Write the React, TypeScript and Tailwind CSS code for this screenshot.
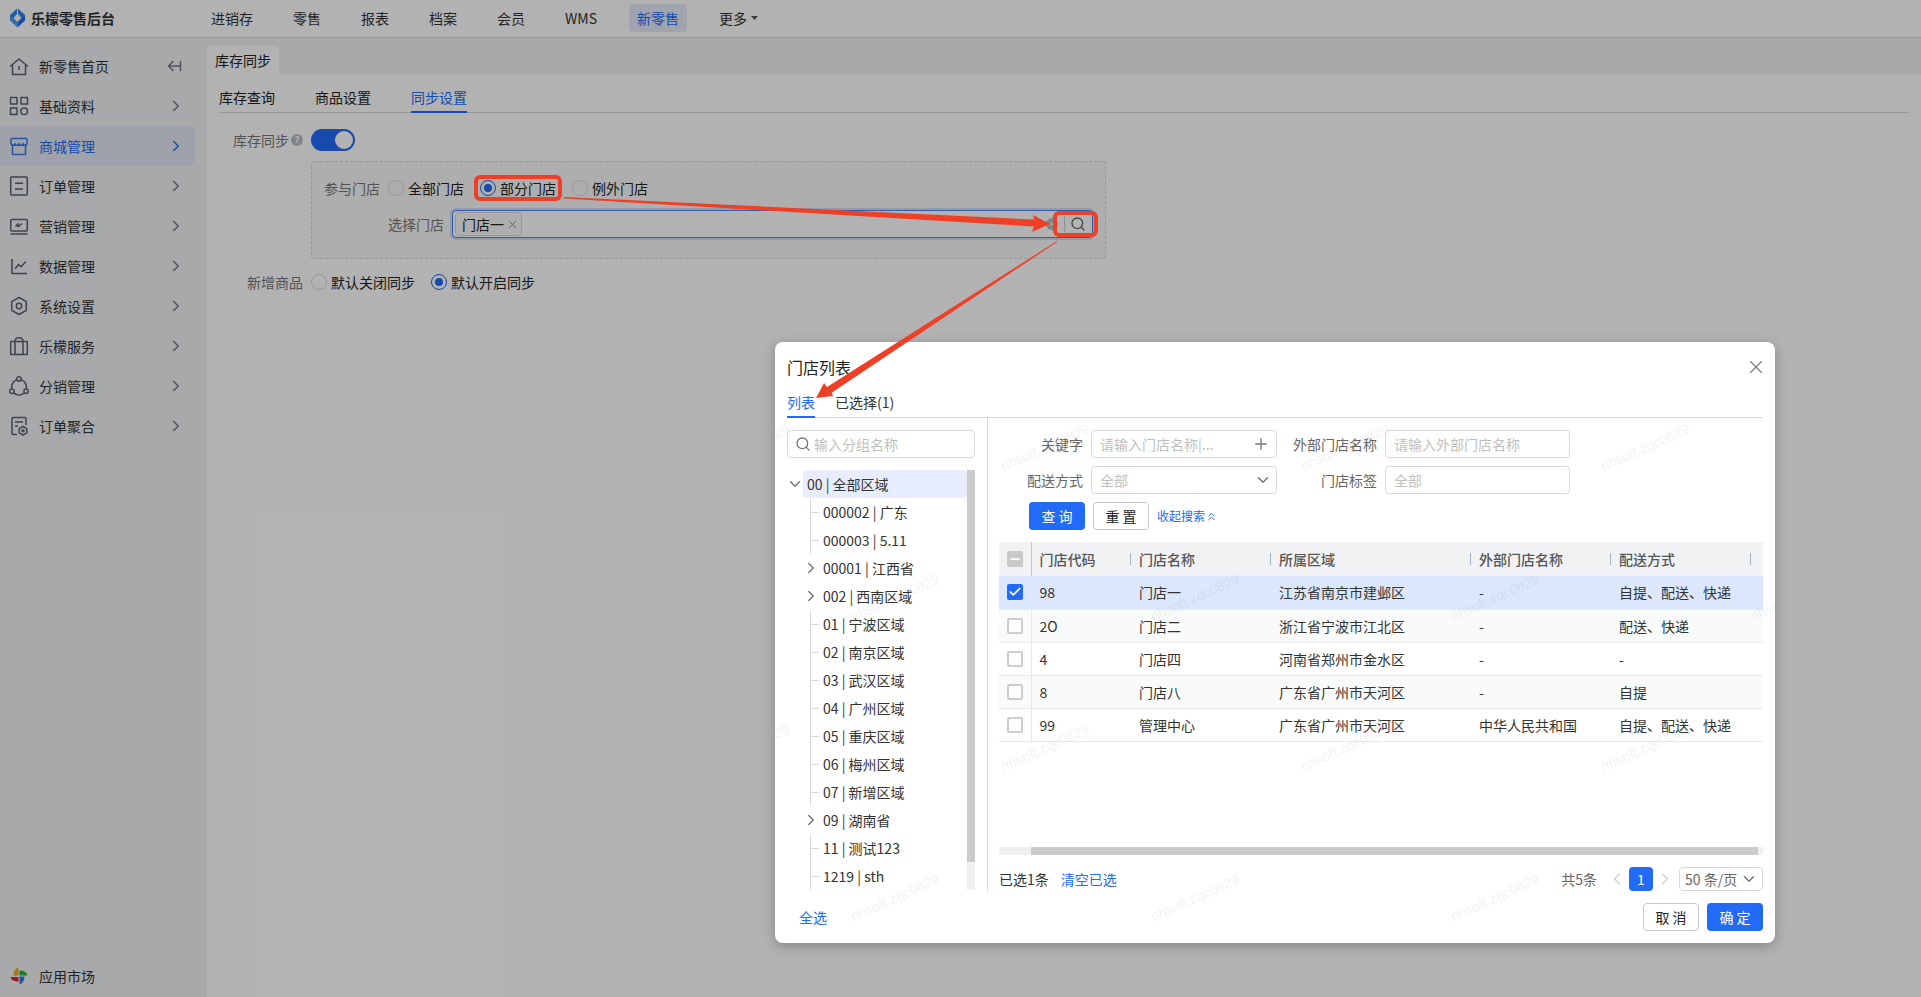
import type { ReactNode } from 'react';
import { Check, ChevronDown, ChevronLeft, ChevronRight, ChevronsUp, Minus, Plus, Search, X } from 'lucide-react';

const topNav = ['进销存', '零售', '报表', '档案', '会员', 'WMS', '新零售'];

const menu: { label: string; icon: ReactNode; active?: boolean }[] = [
  {
    label: '新零售首页',
    icon: <path d="M1 10.5 10 3l9 7.5M3.5 9v9.5h13V9M10 10v4" />,
  },
  {
    label: '基础资料',
    icon: (
      <>
        <rect x="1.5" y="1.5" width="6.5" height="6.5" />
        <rect x="12" y="1.5" width="6.5" height="6.5" />
        <rect x="1.5" y="12" width="6.5" height="6.5" />
        <circle cx="15.2" cy="15.2" r="3.3" />
      </>
    ),
  },
  {
    label: '商城管理',
    active: true,
    icon: (
      <>
        <path d="M3.5 9v9.5h13V9" />
        <path d="M3 2.5h14a1 1 0 0 1 1 1v4c0 1-.8 1.8-2 1.8S14 8.6 14 7.5c0 1.1-.9 1.8-2 1.8s-2-.7-2-1.8c0 1.1-.9 1.8-2 1.8s-2-.7-2-1.8c0 1.1-.8 1.8-2 1.8s-2-.8-2-1.8v-4a1 1 0 0 1 1-1z" />
      </>
    ),
  },
  {
    label: '订单管理',
    icon: (
      <>
        <rect x="1.7" y="1" width="16.6" height="18" rx="1" />
        <path d="M6 7.3h8M6 13h8" />
      </>
    ),
  },
  {
    label: '营销管理',
    icon: (
      <>
        <rect x="1.7" y="3.5" width="16.6" height="11.5" rx="1" />
        <path d="M1.5 18h17M6.5 10.5l2.5-2.7v3l4-3.3" />
      </>
    ),
  },
  {
    label: '数据管理',
    icon: <path d="M3 3v14.5h15M6 13l3.5-4.5 2.5 2.3L17 5.5" />,
  },
  {
    label: '系统设置',
    icon: (
      <>
        <path d="m10 1.5 7.3 4.2v8.6L10 18.5l-7.3-4.2V5.7z" />
        <circle cx="10" cy="10" r="2.7" />
      </>
    ),
  },
  {
    label: '乐檬服务',
    icon: <path d="M1.7 5.5h16.6v13H1.7zM6 18.5V5.5C6 3 7.5 1.7 10 1.7s4 1.3 4 3.8v13" />,
  },
  {
    label: '分销管理',
    icon: (
      <>
        <path d="M7.8 3.6a8 8 0 0 0-5 9.2M12.2 3.6a8 8 0 0 1 5 9.2M5 17.2a8 8 0 0 0 10 0" />
        <circle cx="10" cy="3" r="2.2" />
        <circle cx="2.9" cy="15.2" r="2.2" />
        <circle cx="17.1" cy="15.2" r="2.2" />
      </>
    ),
  },
  {
    label: '订单聚合',
    icon: (
      <>
        <path d="M8 18.5H4a1 1 0 0 1-1-1v-15a1 1 0 0 1 1-1h12a1 1 0 0 1 1 1V9M6 6h8M6 10h3" />
        <path d="m14 10.5 3.8 2.2v4.2L14 19l-3.8-2.1v-4.2z" />
        <circle cx="14" cy="14.8" r="1" />
      </>
    ),
  },
];

const regions = [
  { label: '000002 | 广东' },
  { label: '000003 | 5.11' },
  { label: '00001 | 江西省', parent: true },
  { label: '002 | 西南区域', parent: true },
  { label: '01 | 宁波区域' },
  { label: '02 | 南京区域' },
  { label: '03 | 武汉区域' },
  { label: '04 | 广州区域' },
  { label: '05 | 重庆区域' },
  { label: '06 | 梅州区域' },
  { label: '07 | 新增区域' },
  { label: '09 | 湖南省', parent: true },
  { label: '11 | 测试123' },
  { label: '1219 | sth' },
];

const columns = ['门店代码', '门店名称', '所属区域', '外部门店名称', '配送方式'];

const stores = [
  { code: '98', name: '门店一', area: '江苏省南京市建邺区', outer: '-', delivery: '自提、配送、快递', checked: true },
  { code: '2O', name: '门店二', area: '浙江省宁波市江北区', outer: '-', delivery: '配送、快递' },
  { code: '4', name: '门店四', area: '河南省郑州市金水区', outer: '-', delivery: '-' },
  { code: '8', name: '门店八', area: '广东省广州市天河区', outer: '-', delivery: '自提' },
  { code: '99', name: '管理中心', area: '广东省广州市天河区', outer: '中华人民共和国', delivery: '自提、配送、快递' },
];

function Radio({ name, label, checked }: { name: string; label: string; checked?: boolean }) {
  return (
    <label className="flex items-center gap-1 text-[#222]">
      <input
        type="radio"
        name={name}
        defaultChecked={checked}
        className="grid size-4 appearance-none place-content-center rounded-full border border-[#d9d9d9] before:size-2 before:rounded-full checked:border-[#226bf6] checked:before:bg-[#226bf6]"
      />
      {label}
    </label>
  );
}

function Header() {
  return (
    <header className="flex h-[38px] items-center border-b border-[#dcdcdc] bg-white pb-px">
      <div className="flex w-[203px] items-center gap-[5px] pl-[9px]">
        <svg width="17" height="20" viewBox="0 0 17 20" aria-hidden="true">
          <path d="M8 .5v5.5L4.5 10 1 12.5V7z" fill="#2f86f0" />
          <path d="M9 .5 16 7v5.5L12.5 10 9 6z" fill="#2f86f0" />
          <path d="M1 8.5 4.5 10 8.5 14v5.5L1 12.5z" fill="#4a9cf5" />
          <path d="M16 8.5 12.5 10 8.5 14v5.5L16 12.5z" fill="#1f6fe5" />
        </svg>
        <span className="font-bold text-[#333]">乐檬零售后台</span>
      </div>
      <nav className="flex items-center gap-6">
        {topNav.map((item) => (
          <a
            key={item}
            href="#"
            className={
              item === '新零售'
                ? 'rounded bg-[#e6ebfb] px-2 leading-7 text-[#226bf6]'
                : 'px-2 leading-7 text-[#333]'
            }
          >
            {item}
          </a>
        ))}
        <button type="button" className="flex items-center gap-1 px-2 leading-7 text-[#333]">
          更多
          <svg width="7" height="4" viewBox="0 0 7 4" aria-hidden="true">
            <path d="M0 0h7L3.5 4z" fill="#555" />
          </svg>
        </button>
      </nav>
    </header>
  );
}

function Sidebar() {
  return (
    <aside className="flex w-[207px] shrink-0 flex-col bg-[#f0f2f5] pt-2">
      {menu.map((item, i) => (
        <a
          key={item.label}
          href="#"
          className={
            item.active
              ? 'mr-3 flex h-10 items-center gap-[10px] rounded-r-lg bg-[#e5e9f5] px-[9px] text-[#226bf6]'
              : 'mr-3 flex h-10 items-center gap-[10px] px-[9px] text-[#333]'
          }
        >
          <svg
            width="20"
            height="20"
            viewBox="0 0 20 20"
            fill="none"
            stroke={item.active ? '#3d78ee' : '#5c616c'}
            strokeWidth="1.5"
            strokeLinejoin="round"
            aria-hidden="true"
          >
            {item.icon}
          </svg>
          <span className="flex-1">{item.label}</span>
          <span className="flex w-5 justify-center">
            {i === 0 ? (
              <svg width="18" height="12" viewBox="0 0 18 12" fill="none" stroke="#737780" strokeWidth="1.5" aria-hidden="true">
                <path d="M6.5 1 1.500 6l5 5M1.500 6H13M13.500 1v10" />
              </svg>
            ) : (
              <ChevronRight size={18} strokeWidth={2} color={item.active ? '#226bf6' : '#737780'} />
            )}
          </span>
        </a>
      ))}
      <div className="mt-auto mr-3 border-t border-[#ebecef]">
        <a href="#" className="flex h-[46px] items-center gap-[10px] pt-1 pl-[9px] text-[#333]">
          <svg width="20" height="20" viewBox="0 0 20 20" aria-hidden="true">
            <path d="M9.5 1.5v8H4.5c0-4 2-7 5-8z" fill="#f0a81e" />
            <path d="M10.5 4.5c4 0 7 1.500 8 5h-8z" fill="#1eb52e" />
            <path d="M1.5 11h8v4.500c-4 0-7-1-8-4.500z" fill="#e0282e" />
            <path d="M10.5 10.5h5c0 4-2 7-5 8z" fill="#2f7ff0" />
          </svg>
          应用市场
        </a>
      </div>
    </aside>
  );
}

function SyncSettings() {
  return (
    <main className="flex flex-1 flex-col bg-[#f0f2f5] pt-2">
      <div className="flex">
        <button type="button" className="h-7 rounded-t bg-white px-2 text-[#222]">
          库存同步
        </button>
      </div>
      <div className="flex-1 bg-white px-3 pt-2">
        <nav className="flex gap-10 border-b border-[#d9d9d9]">
          <a href="#" className="h-[30px] leading-[30px] text-[#222]">库存查询</a>
          <a href="#" className="h-[30px] leading-[30px] text-[#222]">商品设置</a>
          <a href="#" className="-mb-px h-[31px] border-b-2 border-[#226bf6] leading-[30px] text-[#226bf6]">同步设置</a>
        </nav>

        <div className="flex items-center pt-4">
          <div className="flex w-[92px] items-center justify-end gap-0.5 pr-2 text-[#777]">
            <label htmlFor="sync">库存同步</label>
            <span className="flex size-3 items-center justify-center rounded-full bg-[#b9bdc4] text-[9px] leading-3 font-bold text-white">?</span>
          </div>
          <input
            id="sync"
            type="checkbox"
            role="switch"
            defaultChecked
            className="flex h-[22px] w-11 appearance-none items-center justify-end rounded-full bg-[#226bf6] px-0.5 before:size-[18px] before:rounded-full before:bg-white"
          />
        </div>

        <div className="mt-[10px] ml-[92px] max-w-[795px] rounded border border-dashed border-[#d9d9d9] bg-[#fafafa] px-3 py-[15px]">
          <fieldset className="flex h-[22px] items-center">
            <legend className="float-left pr-2 text-[#777]">参与门店</legend>
            <div className="flex gap-4">
              <Radio name="scope" label="全部门店" />
              <Radio name="scope" label="部分门店" checked />
              <Radio name="scope" label="例外门店" />
            </div>
          </fieldset>
          <div className="mt-[11px] mb-[5px] flex items-center pl-16">
            <label htmlFor="store" className="pr-2 text-[#777]">选择门店</label>
            <div className="flex h-7 flex-1 items-center rounded border border-[#4a86f5] bg-white px-[2px] ring-2 ring-[#cfdefc]">
              <span className="flex h-6 items-center gap-0.5 rounded border border-[#dcdcdc] bg-[#fafafa] pr-0.5 pl-[6px] text-[#222]">
                门店一
                <button type="button" aria-label="移除门店一">
                  <X size={13} strokeWidth={1.8} color="#888" />
                </button>
              </span>
              <input id="store" className="h-6 min-w-0 flex-1 outline-none" />
              <button type="button" aria-label="清空" className="mr-[6px] flex size-3 items-center justify-center rounded-full bg-[#bfbfbf]">
                <X size={8} color="#fff" strokeWidth={3} />
              </button>
              <button type="button" aria-label="选择" className="flex h-4 items-center border-l border-[#d0d0d0] pr-1 pl-[5px]">
                <Search size={16} strokeWidth={2} color="#666" />
              </button>
            </div>
          </div>
        </div>

        <fieldset className="mt-3 flex h-[22px] items-center">
          <legend className="float-left w-[92px] pr-2 text-right text-[#777]">新增商品</legend>
          <div className="flex gap-4">
            <Radio name="new-goods" label="默认关闭同步" />
            <Radio name="new-goods" label="默认开启同步" checked />
          </div>
        </fieldset>
      </div>
    </main>
  );
}

function RegionTree() {
  return (
    <div className="flex w-[201px] shrink-0 flex-col border-r border-[#d9d9d9] pt-3 pr-3">
      <label className="flex h-7 items-center gap-[3px] rounded border border-[#d9d9d9] px-[7px]">
        <Search size={16} strokeWidth={2} color="#777" />
        <input
          aria-label="分组名称"
          placeholder="输入分组名称"
          className="min-w-0 flex-1 outline-none placeholder:text-[#bfbfbf]"
        />
      </label>
      <div className="mt-3 flex">
        <ul className="flex-1 text-[#333]">
          <li className="flex h-7 items-center">
            <span className="flex w-4 justify-center">
              <ChevronDown size={18} strokeWidth={2} color="#777" className="shrink-0" />
            </span>
            <span className="h-7 flex-1 rounded bg-[#e7edfc] pl-1 leading-7">00 | 全部区域</span>
          </li>
          {regions.map((region) => (
            <li key={region.label} className="flex h-7 items-center pl-[17px]">
              {region.parent ? (
                <span className="mr-[5px] flex w-[14px] justify-center">
                  <ChevronRight size={18} strokeWidth={2} color="#777" className="shrink-0" />
                </span>
              ) : (
                <span className="ml-[6px] flex h-7 w-[13px] items-center border-l border-[#d9d9d9]">
                  <span className="h-px w-2 bg-[#d9d9d9]" />
                </span>
              )}
              {region.label}
            </li>
          ))}
        </ul>
        <div className="w-2 bg-[#f0f0f0]">
          <div className="h-[392px] bg-[#cbcbcb]" />
        </div>
      </div>
    </div>
  );
}

function StoreTable() {
  return (
    <table className="w-full table-fixed border-collapse text-left">
      <colgroup>
        <col className="w-8" />
        <col className="w-[100px]" />
        <col className="w-[140px]" />
        <col className="w-[200px]" />
        <col className="w-[140px]" />
        <col className="w-[140px]" />
        <col />
      </colgroup>
      <thead>
        <tr className="h-[34px] bg-[#f1f2f4] text-[#555]">
          <th className="border-r border-[#c3c7d0] pl-2">
            <button type="button" aria-label="取消全部" className="flex size-4 items-center justify-center rounded-xs bg-[#c9c9c9]">
              <Minus size={14} strokeWidth={3} color="#fff" />
            </button>
          </th>
          {columns.map((column) => (
            <th key={column} className="pl-2 font-medium">
              <span className="flex h-3 items-center justify-between border-r border-[#a9b0be]">{column}</span>
            </th>
          ))}
          <th />
        </tr>
      </thead>
      <tbody>
        {stores.map((store) => (
          <tr
            key={store.code}
            className={
              store.checked
                ? 'h-[33px] border-b border-[#e8eaec] bg-[#dde7fb] text-[#333]'
                : 'h-[33px] border-b border-[#e8eaec] text-[#333] even:bg-[#f9fbfb]'
            }
          >
            <td className="border-r border-[#e8e8e8] pl-2">
              <label className="relative block size-4">
                <input
                  type="checkbox"
                  aria-label={store.name}
                  defaultChecked={store.checked}
                  className="block size-4 appearance-none rounded-xs border-2 border-[#ccc] bg-white checked:border-[#226bf6] checked:bg-[#226bf6]"
                />
                {store.checked && (
                  <Check size={14} strokeWidth={3} color="#fff" className="absolute top-px left-px" />
                )}
              </label>
            </td>
            <td className="pl-2">{store.code}</td>
            <td className="pl-2">{store.name}</td>
            <td className="pl-2">{store.area}</td>
            <td className="pl-2">{store.outer}</td>
            <td className="pl-2">{store.delivery}</td>
            <td />
          </tr>
        ))}
      </tbody>
    </table>
  );
}

function StoreModal() {
  const field = 'h-7 w-full rounded border border-[#d9d9d9] bg-white px-2 outline-none placeholder:text-[#bfbfbf]';

  return (
    <div
      role="dialog"
      aria-label="门店列表"
      className="absolute top-[342px] left-[775px] w-[1000px] overflow-hidden rounded-lg bg-white px-3 pb-3 shadow-[0_3px_12px_rgba(0,0,0,0.25)]"
    >
      <div className="flex items-center justify-between pt-3">
        <h2 className="text-base leading-[26px] text-[#222]">门店列表</h2>
        <button type="button" aria-label="关闭" className="-mr-1">
          <X size={22} strokeWidth={1.2} color="#777" />
        </button>
      </div>

      <div role="tablist" className="mt-[7px] flex gap-5 border-b border-[#d9d9d9]">
        <button type="button" role="tab" className="-mb-px h-[31px] border-b-2 border-[#226bf6] pt-px text-[#226bf6]">
          列表
        </button>
        <button type="button" role="tab" className="h-[30px] text-[#333]">
          已选择(1)
        </button>
      </div>

      <div className="flex">
        <RegionTree />

        <div className="flex min-w-0 flex-1 flex-col pt-3 pl-[11px]">
          <form className="grid grid-cols-[84px_186px_92px_185px] items-center gap-2 text-right text-[#666]">
            <label htmlFor="keyword">关键字</label>
            <div className="flex h-7 items-center rounded border border-[#d9d9d9] pr-[6px] pl-2">
              <input
                id="keyword"
                placeholder="请输入门店名称|..."
                className="min-w-0 flex-1 outline-none placeholder:text-[#bfbfbf]"
              />
              <Plus size={18} strokeWidth={1.8} color="#777" />
            </div>
            <label htmlFor="outer">外部门店名称</label>
            <input id="outer" placeholder="请输入外部门店名称" className={field} />
            <label htmlFor="delivery">配送方式</label>
            <div className="relative">
              <select id="delivery" className="h-7 w-full appearance-none rounded border border-[#d9d9d9] bg-white px-2 text-[#bfbfbf]">
                <option>全部</option>
              </select>
              <ChevronDown size={18} strokeWidth={2} color="#777" className="absolute top-[5px] right-[5px]" />
            </div>
            <label htmlFor="tag">门店标签</label>
            <input id="tag" placeholder="全部" className={field} />
          </form>

          <div className="mt-2 flex items-center gap-2 pl-[30px]">
            <button type="button" className="h-7 w-14 rounded bg-[#226bf6] text-white">查 询</button>
            <button type="button" className="h-7 w-14 rounded border border-[#c8c8c8] text-[#222]">重 置</button>
            <button type="button" className="flex items-center text-xs text-[#226bf6]">
              收起搜索
              <ChevronsUp size={13} strokeWidth={1.8} />
            </button>
          </div>

          <div className="mt-3 min-h-[305px]">
            <StoreTable />
          </div>
          <div className="h-2 bg-[#f0f0f0] pr-[5px] pl-8">
            <div className="h-2 bg-[#cbcbcb]" />
          </div>

          <div className="mt-3 flex h-6 items-center">
            <span className="text-[#333]">已选1条</span>
            <a href="#" className="ml-3 text-[#226bf6]">清空已选</a>
            <span className="ml-auto text-[#666]">共5条</span>
            <button type="button" aria-label="上一页" className="ml-[10px]">
              <ChevronLeft size={20} strokeWidth={1.2} color="#aaa" />
            </button>
            <button type="button" className="mx-0.5 size-6 rounded bg-[#226bf6] text-white">1</button>
            <button type="button" aria-label="下一页">
              <ChevronRight size={20} strokeWidth={1.2} color="#aaa" />
            </button>
            <div className="relative ml-1">
              <select aria-label="每页条数" className="h-6 w-[84px] appearance-none rounded border border-[#d9d9d9] bg-white pl-[5px] text-[#666]">
                <option>50 条/页</option>
              </select>
              <ChevronDown size={18} strokeWidth={2} color="#777" className="absolute top-[3px] right-[5px]" />
            </div>
          </div>
        </div>
      </div>

      <div className="mt-3 flex items-center gap-2 pl-3">
        <a href="#" className="mr-auto text-[#226bf6]">全选</a>
        <button type="button" className="h-7 w-14 rounded border border-[#c8c8c8] bg-white text-[#222]">取 消</button>
        <button type="button" className="h-7 w-14 rounded bg-[#226bf6] text-white">确 定</button>
      </div>

      {/* Watermark */}
      <svg className="pointer-events-none absolute inset-0 size-full" aria-hidden="true">
        <defs>
          <pattern id="watermark" x="50" y="0" width="300" height="300" patternUnits="userSpaceOnUse">
            <g fill="#000" fillOpacity="0.05" fontFamily="Liberation Sans, sans-serif" fontSize="14" textAnchor="middle">
              <text transform="translate(222 110) rotate(-24)">nhsoft.zqc0829</text>
              <text transform="translate(72 260) rotate(-24)">nhsoft.zqc0829</text>
            </g>
          </pattern>
        </defs>
        <rect width="100%" height="100%" fill="url(#watermark)" />
      </svg>
    </div>
  );
}

function Annotations() {
  return (
    <svg width="1120" height="420" viewBox="0 0 1120 420" className="pointer-events-none absolute top-0 left-0" aria-hidden="true">
      <g fill="none" stroke="#ee4026" strokeWidth="4">
        <rect x="476" y="177" width="84" height="22" rx="4" />
        <rect x="1055" y="213" width="41" height="22" rx="4" />
      </g>
      <g fill="#ee4026">
        <path d="M564 197 1034 219.5 1033 215l17 9-18 8 2-5.5L564 198.5z" />
        <path d="M1057 241 827 387l-3-4-8 15 17-2-1-3.5L1057 242z" />
      </g>
    </svg>
  );
}

export default function App() {
  return (
    <div className="relative flex min-h-screen flex-col font-['Noto_Sans_CJK_SC',sans-serif] text-sm leading-[22px]">
      <Header />
      <div className="flex flex-1">
        <Sidebar />
        <SyncSettings />
      </div>
      <div className="absolute inset-0 bg-black/30" />
      <StoreModal />
      <Annotations />
    </div>
  );
}
